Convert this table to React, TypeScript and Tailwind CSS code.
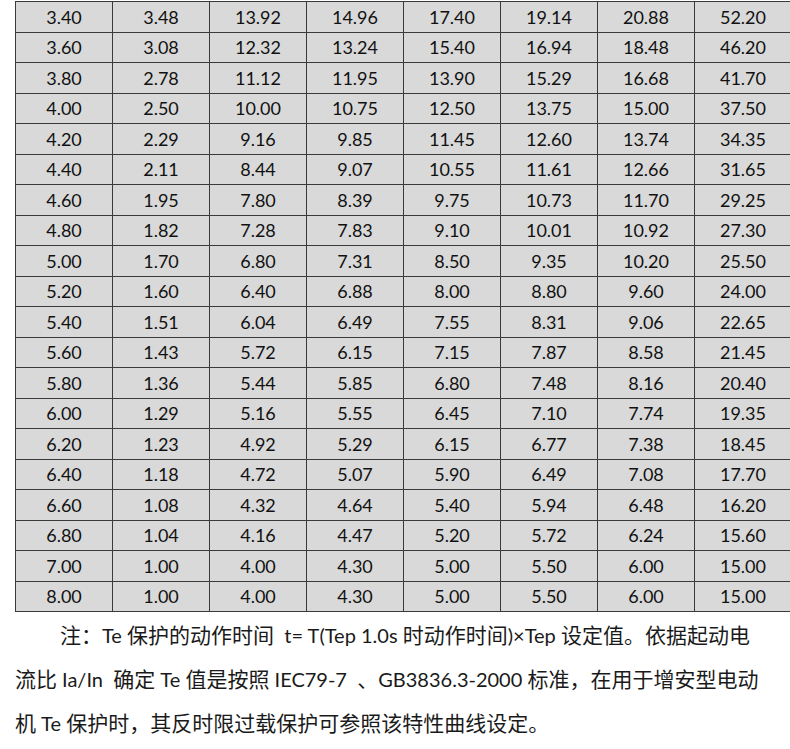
import React from "react";

const rows: string[][] = [
  ["3.40", "3.48", "13.92", "14.96", "17.40", "19.14", "20.88", "52.20"],
  ["3.60", "3.08", "12.32", "13.24", "15.40", "16.94", "18.48", "46.20"],
  ["3.80", "2.78", "11.12", "11.95", "13.90", "15.29", "16.68", "41.70"],
  ["4.00", "2.50", "10.00", "10.75", "12.50", "13.75", "15.00", "37.50"],
  ["4.20", "2.29", "9.16", "9.85", "11.45", "12.60", "13.74", "34.35"],
  ["4.40", "2.11", "8.44", "9.07", "10.55", "11.61", "12.66", "31.65"],
  ["4.60", "1.95", "7.80", "8.39", "9.75", "10.73", "11.70", "29.25"],
  ["4.80", "1.82", "7.28", "7.83", "9.10", "10.01", "10.92", "27.30"],
  ["5.00", "1.70", "6.80", "7.31", "8.50", "9.35", "10.20", "25.50"],
  ["5.20", "1.60", "6.40", "6.88", "8.00", "8.80", "9.60", "24.00"],
  ["5.40", "1.51", "6.04", "6.49", "7.55", "8.31", "9.06", "22.65"],
  ["5.60", "1.43", "5.72", "6.15", "7.15", "7.87", "8.58", "21.45"],
  ["5.80", "1.36", "5.44", "5.85", "6.80", "7.48", "8.16", "20.40"],
  ["6.00", "1.29", "5.16", "5.55", "6.45", "7.10", "7.74", "19.35"],
  ["6.20", "1.23", "4.92", "5.29", "6.15", "6.77", "7.38", "18.45"],
  ["6.40", "1.18", "4.72", "5.07", "5.90", "6.49", "7.08", "17.70"],
  ["6.60", "1.08", "4.32", "4.64", "5.40", "5.94", "6.48", "16.20"],
  ["6.80", "1.04", "4.16", "4.47", "5.20", "5.72", "6.24", "15.60"],
  ["7.00", "1.00", "4.00", "4.30", "5.00", "5.50", "6.00", "15.00"],
  ["8.00", "1.00", "4.00", "4.30", "5.00", "5.50", "6.00", "15.00"],
];

// Latin runs in the note are set a touch smaller than the CJK text
const L = ({ children }: { children: React.ReactNode }) => (
  <span className="text-[20px]">{children}</span>
);

export default function App() {
  return (
    <div className="w-[790px] h-[749px] bg-white overflow-hidden font-['Lato','Noto_Sans_CJK_SC',sans-serif] text-[#1a1a1a]">
      <div className="pl-[15px] pt-px">
        {/* Data table */}
        <table className="border-collapse table-fixed w-[775px] bg-[#d9d9d9]">
          <tbody>
            {rows.map((row, i) => (
              <tr key={i} className="h-[30.5px]">
                {row.map((cell, j) => (
                  <td
                    key={j}
                    className="border border-[#3a3a3a] text-center text-[18px] leading-none p-0 w-[97px] text-[#111]"
                  >
                    {cell}
                  </td>
                ))}
              </tr>
            ))}
          </tbody>
        </table>

        {/* Note */}
        <div className="text-[21px] leading-[43px] mt-[1px] w-[760px]">
          <div className="pl-[45px] whitespace-pre">
            注：<L>Te </L>保护的动作时间<L>  t= T(Tep 1.0s </L>时动作时间<L>)×Tep </L>设定值。依据起动电
          </div>
          <div className="whitespace-pre">
            流比<L> Ia/In  </L>确定<L> Te </L>值是按照<L> IEC79-7  </L>、<L>GB3836.3-2000 </L>标准，在用于增安型电动
          </div>
          <div className="whitespace-pre">
            机<L> Te </L>保护时，其反时限过载保护可参照该特性曲线设定。
          </div>
        </div>
      </div>
    </div>
  );
}
